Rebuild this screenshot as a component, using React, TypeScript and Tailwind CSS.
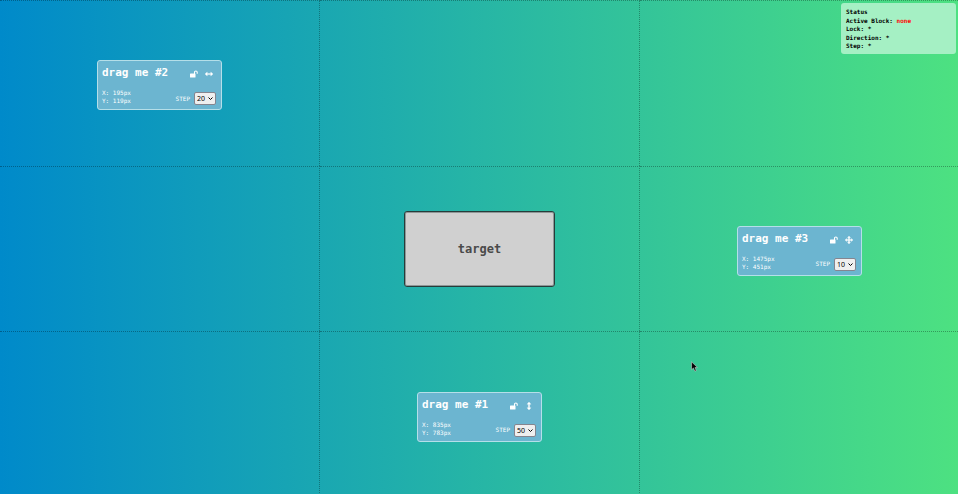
import { useState } from "react";

type Axis = "both" | "x" | "y";

type Block = {
  id: number;
  axis: Axis;
  x: number;
  y: number;
  step: number;
};

const blocks: Record<number, Block> = {
  0: { id: 2, axis: "x", x: 195, y: 119, step: 20 },
  5: { id: 3, axis: "both", x: 1475, y: 451, step: 10 },
  7: { id: 1, axis: "y", x: 835, y: 783, step: 50 },
};

const axisPaths: Record<Axis, string> = {
  x: "M0 8 L4.5 4 V6.8 H11.5 V4 L16 8 L11.5 12 V9.2 H4.5 V12 Z",
  y: "M8 0 L12 4.5 H9.2 V11.5 H12 L8 16 L4 11.5 H6.8 V4.5 H4 Z",
  both: "M8 0 L11 3.5 H9.2 V6.8 H12.5 V5 L16 8 L12.5 11 V9.2 H9.2 V12.5 H11 L8 16 L5 12.5 H6.8 V9.2 H3.5 V11 L0 8 L3.5 5 V6.8 H6.8 V3.5 H5 Z",
};

function UnlockIcon() {
  return (
    <svg viewBox="0 0 18 16" className="h-2 w-[9px]" aria-hidden="true">
      <rect x="2" y="7" width="11" height="8" rx="1.2" fill="white" />
      <path d="M11 8 V4.6 a2.7 2.7 0 0 1 5.4 0 V7.5" fill="none" stroke="white" strokeWidth="2.2" />
    </svg>
  );
}

function DragCard({ block }: { block: Block }) {
  const [step, setStep] = useState(block.step);
  const selectId = `step-${block.id}`;
  return (
    <article className="mt-1 flex h-[50px] w-[125px] flex-col justify-between rounded-[3px] border border-[#b5dfe9] bg-[#6cb5d0] py-1 pr-[5px] pl-1 text-white">
      <header className="flex items-center justify-between">
        <h2 className="text-[11px] leading-4 font-bold">drag me #{block.id}</h2>
        <div className="flex items-center gap-[7px] pt-[2px] pr-[3px]">
          <button type="button" aria-label="Toggle lock">
            <UnlockIcon />
          </button>
          <button type="button" aria-label="Change direction">
            <svg viewBox="0 0 16 16" className="size-2" aria-hidden="true">
              <path d={axisPaths[block.axis]} fill="white" stroke="white" strokeWidth="0.6" />
            </svg>
          </button>
        </div>
      </header>
      <div className="flex items-end justify-between">
        <div className="text-[6px] leading-[8px]">
          <p>X: {block.x}px</p>
          <p>Y: {block.y}px</p>
        </div>
        <div className="flex items-center gap-1">
          <label htmlFor={selectId} className="text-[6px] leading-[8px]">
            STEP
          </label>
          <div className="relative">
            <select
              id={selectId}
              value={step}
              onChange={(e) => setStep(Number(e.target.value))}
              className="block h-[13px] w-[22px] appearance-none rounded-[2px] border border-[#85858f] bg-[#efefef] pl-[2px] font-['Noto_Sans',sans-serif] text-[7px] leading-[11px] text-black"
            >
              <option value={10}>10</option>
              <option value={20}>20</option>
              <option value={50}>50</option>
            </select>
            <svg
              viewBox="0 0 10 6"
              className="pointer-events-none absolute top-[5px] right-[3px] h-[3px] w-[5px]"
              aria-hidden="true"
            >
              <path d="M1 1 L5 5 L9 1" fill="none" stroke="black" strokeWidth="2" />
            </svg>
          </div>
        </div>
      </div>
    </article>
  );
}

function StatusPanel() {
  return (
    <aside className="absolute top-[3px] right-[2px] grid h-[51px] w-[115px] grid-rows-5 rounded-[3px] bg-[#a5f0c4] px-[5px] py-1 text-[6px] leading-[9px] font-bold text-black">
      <p>Status</p>
      <p>
        Active Block: <span className="text-[#ff0000]">none</span>
      </p>
      <p>Lock: *</p>
      <p>Direction: *</p>
      <p>Step: *</p>
    </aside>
  );
}

function Pointer() {
  return (
    <svg
      viewBox="0 0 12 18"
      className="pointer-events-none absolute top-[361px] left-[691px] h-[11px] w-[7px]"
      aria-hidden="true"
    >
      <path
        d="M1 1 V14.5 L4.2 11.5 L6.5 17 L9 16 L6.8 10.8 H11 Z"
        fill="black"
        stroke="#d0d0d0"
        strokeWidth="1"
      />
    </svg>
  );
}

export default function App() {
  return (
    <main className="relative h-screen overflow-hidden bg-linear-to-r/srgb from-[#008aca] to-[#4de181] font-['DejaVu_Sans_Mono',monospace]">
      <div className="grid h-[calc(100%+3px)] w-[calc(100%+2px)] grid-cols-3 grid-rows-3">
        {Array.from({ length: 9 }, (_, i) => (
          <section
            key={i}
            className="flex items-center justify-center border-t border-r border-dotted border-black/30"
          >
            {blocks[i] && <DragCard block={blocks[i]} />}
            {i === 4 && (
              <div className="flex h-[76px] w-[151px] items-center justify-center rounded-[3px] border border-[#263c3a] bg-[#d0d0d0] text-[12px] leading-4 font-bold text-[#4a4a4a] inset-ring inset-ring-[#8f9696]">
                target
              </div>
            )}
          </section>
        ))}
      </div>
      <StatusPanel />
      <Pointer />
    </main>
  );
}
